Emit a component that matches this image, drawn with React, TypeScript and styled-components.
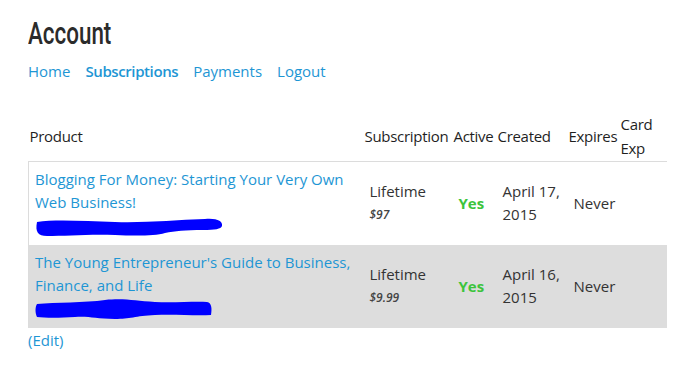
import React from 'react';
import styled, { createGlobalStyle } from 'styled-components';

const GlobalStyle = createGlobalStyle`
  body {
    margin: 0;
    background: #fff;
    font-family: 'Open Sans', 'Liberation Sans', sans-serif;
    color: #333;
  }
`;

const LINK = '#1e96d4';

const Page = styled.div`
  padding: 14px 28px 0 28px;
`;

const Title = styled.h1`
  margin: 0;
  font-family: 'Roboto', 'Liberation Sans', sans-serif;
  font-size: 32px;
  font-weight: 500;
  line-height: 38px;
  color: #2b2b2b;
`;

// the original heading uses a condensed display face; squeeze a regular one
const TitleText = styled.span`
  display: inline-block;
  transform: scaleX(0.7);
  transform-origin: left center;
`;

const Nav = styled.nav`
  display: flex;
  gap: 15px;
  margin-top: 8px;
  font-size: 15px;
  line-height: 22px;
`;

const NavLink = styled.a<{ $active?: boolean }>`
  color: ${LINK};
  text-decoration: none;
  font-weight: ${(p) => (p.$active ? 600 : 400)};
  letter-spacing: ${(p) => (p.$active ? '-0.4px' : '0')};
`;

const Table = styled.table`
  margin-top: 30px;
  width: 638px;
  border-collapse: collapse;
  table-layout: fixed;
  font-size: 15px;
`;

const Th = styled.th`
  padding: 0 2px 1px 1px;
  text-align: left;
  font-weight: 500;
  line-height: 24px;
  vertical-align: middle;
  white-space: nowrap;
  color: #1f1f1f;
  letter-spacing: -0.3px;
`;

const HeadRow = styled.tr`
  border-bottom: 1px solid #dcdcdc;
`;

const Row = styled.tr<{ $shaded?: boolean }>`
  background: ${(p) => (p.$shaded ? '#dddddd' : '#fff')};
  border-left: 1px solid #dcdcdc;
`;

const Td = styled.td`
  padding: 6px 6px 7px;
  vertical-align: middle;
  line-height: 23px;
  color: #333;
  white-space: nowrap;
`;

const ProductCell = styled(Td)`
  white-space: normal;
`;

const ProductLink = styled.a`
  display: block;
  color: ${LINK};
  text-decoration: none;
`;

const Price = styled.div`
  font-size: 12px;
  font-style: italic;
  font-weight: 600;
  color: #444;
  line-height: 24px;
`;

const Yes = styled.span`
  color: #3cc43c;
  font-weight: 700;
`;

const Edit = styled.a`
  display: inline-block;
  margin-top: 1px;
  color: ${LINK};
  text-decoration: none;
  font-size: 15px;
  line-height: 22px;
`;

const Scribble: React.FC<{ width: number; d: string }> = ({ width, d }) => (
  <svg width={width} height={24} viewBox={`0 0 ${width} 24`} style={{ display: 'block' }}>
    <path d={d} fill="#0000ff" />
  </svg>
);

const rows = [
  {
    title: 'Blogging For Money: Starting Your Very Own Web Business!',
    price: '$97',
    created: ['April 17,', '2015'],
    scribble: {
      width: 190,
      d: 'M2 8 C20 5 50 7 80 8 C110 9 140 6 170 5 C182 4 188 7 187 12 C186 15 180 16 168 16 C150 16 140 17 130 19 C120 22 100 22 80 21 C55 20 30 22 12 22 C3 22 0 18 2 8 Z',
    },
  },
  {
    title: "The Young Entrepreneur's Guide to Business, Finance, and Life",
    price: '$9.99',
    created: ['April 16,', '2015'],
    scribble: {
      width: 180,
      d: 'M2 7 C20 5 50 6 70 3 C90 1 100 4 120 5 C140 6 160 4 172 5 C177 6 177 12 176 18 C160 19 140 17 120 18 C100 19 95 22 80 22 C60 22 55 19 40 20 C25 21 10 21 2 20 C0 16 0 10 2 7 Z',
    },
  },
];

const App: React.FC = () => {
  return (
    <Page>
      <GlobalStyle />
      <Title>
        <TitleText>Account</TitleText>
      </Title>
      <Nav>
        <NavLink href="#">Home</NavLink>
        <NavLink href="#" $active>
          Subscriptions
        </NavLink>
        <NavLink href="#">Payments</NavLink>
        <NavLink href="#">Logout</NavLink>
      </Nav>
      <Table>
        <colgroup>
          <col style={{ width: 335 }} />
          <col style={{ width: 89 }} />
          <col style={{ width: 44 }} />
          <col style={{ width: 71 }} />
          <col style={{ width: 52 }} />
          <col style={{ width: 47 }} />
        </colgroup>
        <thead>
          <HeadRow>
            <Th>Product</Th>
            <Th>Subscription</Th>
            <Th>Active</Th>
            <Th>Created</Th>
            <Th>Expires</Th>
            <Th>
              Card
              <br />
              Exp
            </Th>
          </HeadRow>
        </thead>
        <tbody>
          {rows.map((r, i) => (
            <Row key={i} $shaded={i % 2 === 1}>
              <ProductCell>
                <ProductLink href="#">{r.title}</ProductLink>
                <Scribble width={r.scribble.width} d={r.scribble.d} />
              </ProductCell>
              <Td>
                Lifetime
                <Price>{r.price}</Price>
              </Td>
              <Td>
                <Yes>Yes</Yes>
              </Td>
              <Td>
                {r.created[0]}
                <br />
                {r.created[1]}
              </Td>
              <Td>Never</Td>
              <Td />
            </Row>
          ))}
        </tbody>
      </Table>
      <Edit href="#">(Edit)</Edit>
    </Page>
  );
};

export default App;
